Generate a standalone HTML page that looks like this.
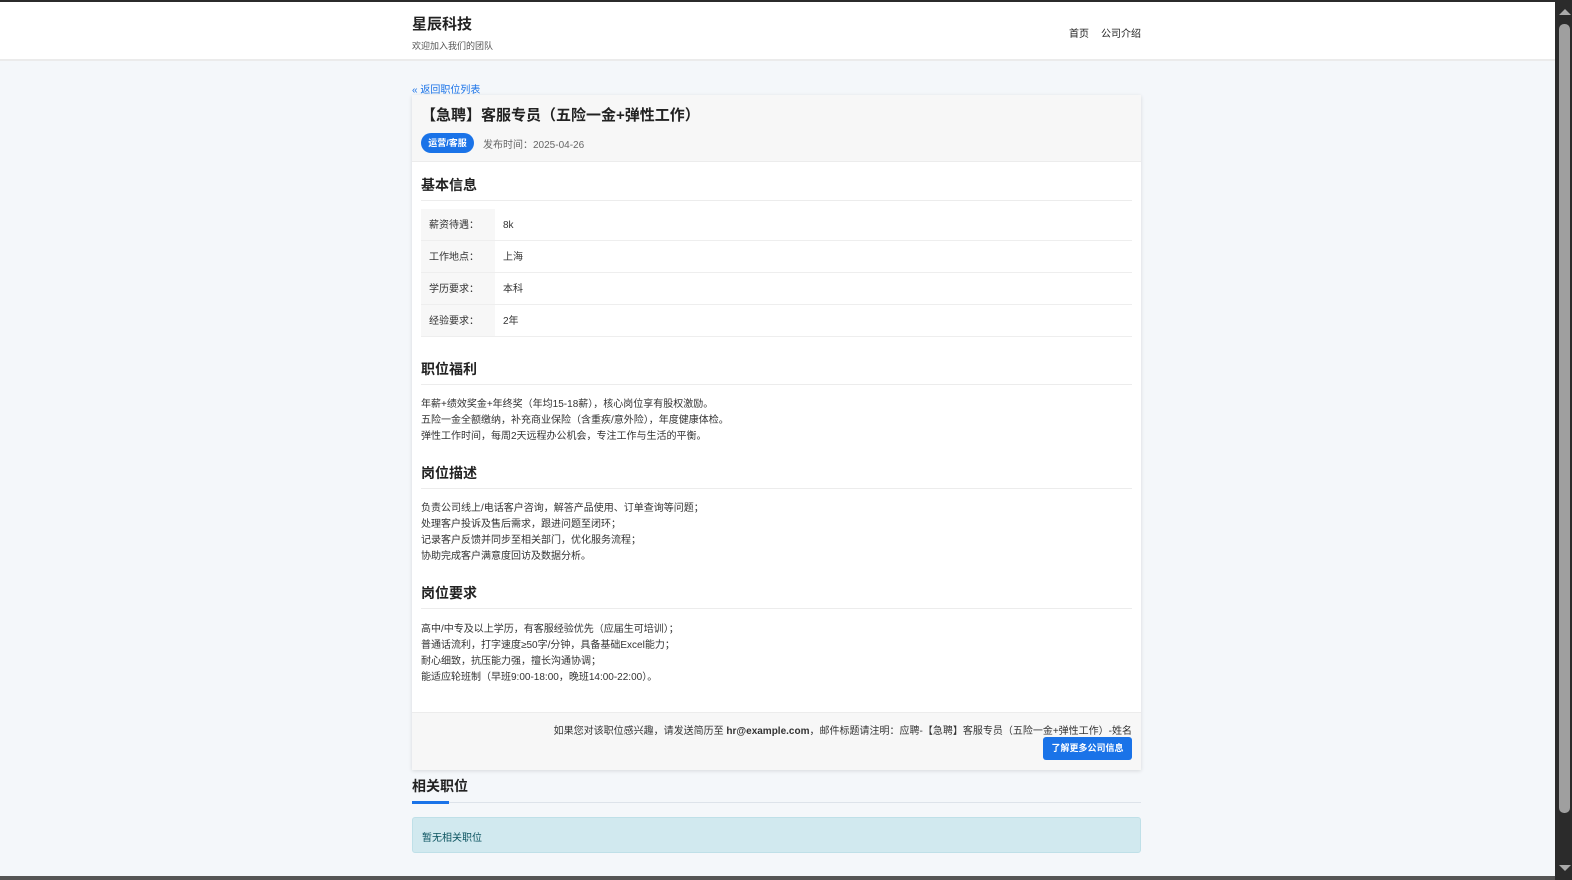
<!DOCTYPE html>
<html><head><meta charset="utf-8"><style>
*{margin:0;padding:0;box-sizing:border-box}
body{width:1572px;height:880px;overflow:hidden;background:#f4f7fa;font-family:"Liberation Sans","Noto Sans CJK SC",sans-serif;color:#222;position:relative}
.a{position:absolute;white-space:nowrap}
.top{position:absolute;left:0;top:0;width:1555px;height:2px;background:#2b2b2b}
.hdr{position:absolute;left:0;top:2px;width:1555px;height:59px;background:#fff;border-bottom:2px solid #ebebeb}
.card{position:absolute;left:412px;top:95px;width:729px;height:675px;background:#fff;box-shadow:0 1px 4px rgba(0,0,0,.12)}
.ch{position:absolute;left:0;top:0;width:729px;height:67px;background:#f7f7f7;border-bottom:1px solid #ececec}
.cf{position:absolute;left:0;top:617px;width:729px;height:58px;background:#f7f7f7;border-top:1px solid #ececec}
.h{font-size:14px;font-weight:bold;color:#222}
.line{position:absolute;left:421px;width:711px;height:1px;background:#ececec}
.t{font-size:10px;color:#333;line-height:16px}
.row{position:absolute;left:421px;width:711px;height:32px;border-bottom:1px solid #eee;font-size:10px;color:#333}
.row .k{position:absolute;left:0;top:0;width:74px;height:31px;background:#f7f7f7;padding:11px 0 0 8px;line-height:12px}
.row .v{position:absolute;left:82px;top:11px;line-height:12px}
.sb{position:absolute;left:1555px;top:0;width:17px;height:880px;background:#2b2b2b}
.th{position:absolute;left:1559px;top:24px;width:11px;height:789px;background:#9f9f9f;border-radius:5px}
</style></head><body>
<div class="top"></div>
<div class="hdr"></div>
<div class="a" style="left:412px;top:13px;font-size:15px;font-weight:bold">星辰科技</div>
<div class="a" style="left:412px;top:39px;font-size:9px;color:#555">欢迎加入我们的团队</div>
<div class="a" style="left:1069px;top:25px;font-size:10px;color:#222">首页</div>
<div class="a" style="left:1101px;top:25px;font-size:10px;color:#222">公司介绍</div>
<div class="a" style="left:412px;top:81px;font-size:10px;color:#1a73e8">« 返回职位列表</div>
<div class="card"><div class="ch"></div><div class="cf"></div></div>
<div class="a" style="left:421px;top:104px;font-size:15px;font-weight:bold">【急聘】客服专员（五险一金+弹性工作）</div>
<div class="a" style="left:421px;top:133px;width:53px;height:20px;border-radius:10px;background:#1a73e8;color:#fff;font-size:9px;text-align:center;line-height:20px;font-weight:bold">运营/客服</div>
<div class="a" style="left:483px;top:136px;font-size:10px;color:#666">发布时间：2025-04-26</div>
<div class="a h" style="left:421px;top:175px">基本信息</div>
<div class="line" style="top:200px"></div>
<div class="row" style="top:209px"><div class="k">薪资待遇：</div><div class="v">8k</div></div>
<div class="row" style="top:241px"><div class="k">工作地点：</div><div class="v">上海</div></div>
<div class="row" style="top:273px"><div class="k">学历要求：</div><div class="v">本科</div></div>
<div class="row" style="top:305px"><div class="k">经验要求：</div><div class="v">2年</div></div>
<div class="a h" style="left:421px;top:359px">职位福利</div>
<div class="line" style="top:384px"></div>
<div class="a t" style="left:421px;top:397px">年薪+绩效奖金+年终奖（年均15-18薪），核心岗位享有股权激励。<br>五险一金全额缴纳，补充商业保险（含重疾/意外险），年度健康体检。<br>弹性工作时间，每周2天远程办公机会，专注工作与生活的平衡。</div>
<div class="a h" style="left:421px;top:463px">岗位描述</div>
<div class="line" style="top:488px"></div>
<div class="a t" style="left:421px;top:501px">负责公司线上/电话客户咨询，解答产品使用、订单查询等问题；<br>处理客户投诉及售后需求，跟进问题至闭环；<br>记录客户反馈并同步至相关部门，优化服务流程；<br>协助完成客户满意度回访及数据分析。</div>
<div class="a h" style="left:421px;top:583px">岗位要求</div>
<div class="line" style="top:608px"></div>
<div class="a t" style="left:421px;top:622px">高中/中专及以上学历，有客服经验优先（应届生可培训）；<br>普通话流利，打字速度≥50字/分钟，具备基础Excel能力；<br>耐心细致，抗压能力强，擅长沟通协调；<br>能适应轮班制（早班9:00-18:00，晚班14:00-22:00）。</div>
<div class="a" style="right:440px;top:722px;font-size:10px;color:#333">如果您对该职位感兴趣，请发送简历至 <b>hr@example.com</b>，邮件标题请注明：应聘-【急聘】客服专员（五险一金+弹性工作）-姓名</div>
<div class="a" style="left:1043px;top:737px;width:89px;height:23px;background:#1a73e8;border-radius:3px;color:#fff;font-size:9px;font-weight:bold;text-align:center;line-height:23px">了解更多公司信息</div>
<div class="a" style="left:412px;top:776px;font-size:14px;font-weight:bold">相关职位</div>
<div class="a" style="left:412px;top:802px;width:729px;height:1px;background:#dde3ea"></div>
<div class="a" style="left:412px;top:801px;width:37px;height:3px;background:#1a73e8"></div>
<div class="a" style="left:412px;top:817px;width:729px;height:36px;background:#d1e9ef;border:1px solid #bfe0e8;border-radius:3px;font-size:10px;color:#0c5460;padding:11px 0 0 9px">暂无相关职位</div>
<div class="a" style="left:0;top:876px;width:1555px;height:4px;background:#555"></div>
<div class="sb"></div><div class="th"></div>
<div class="a" style="left:1559px;top:9px;width:0;height:0;border-left:6px solid transparent;border-right:6px solid transparent;border-bottom:6px solid #aaa"></div>
<div class="a" style="left:1559px;top:865px;width:0;height:0;border-left:6px solid transparent;border-right:6px solid transparent;border-top:6px solid #aaa"></div>
</body></html>
